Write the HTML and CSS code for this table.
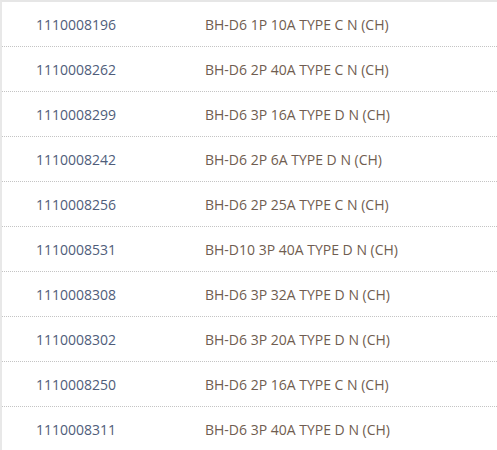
FILE: index.html
```html
<!DOCTYPE html>
<html>
<head>
<meta charset="utf-8">
<link rel="stylesheet" href="styles.css">
</head>
<body>
<div class="list">
  <div class="row"><span class="code">1110008196</span><span class="name">BH-D6 1P 10A TYPE C N (CH)</span></div>
  <div class="row"><span class="code">1110008262</span><span class="name">BH-D6 2P 40A TYPE C N (CH)</span></div>
  <div class="row"><span class="code">1110008299</span><span class="name">BH-D6 3P 16A TYPE D N (CH)</span></div>
  <div class="row"><span class="code">1110008242</span><span class="name">BH-D6 2P 6A TYPE D N (CH)</span></div>
  <div class="row"><span class="code">1110008256</span><span class="name">BH-D6 2P 25A TYPE C N (CH)</span></div>
  <div class="row"><span class="code">1110008531</span><span class="name">BH-D10 3P 40A TYPE D N (CH)</span></div>
  <div class="row"><span class="code">1110008308</span><span class="name">BH-D6 3P 32A TYPE D N (CH)</span></div>
  <div class="row"><span class="code">1110008302</span><span class="name">BH-D6 3P 20A TYPE D N (CH)</span></div>
  <div class="row"><span class="code">1110008250</span><span class="name">BH-D6 2P 16A TYPE C N (CH)</span></div>
  <div class="row"><span class="code">1110008311</span><span class="name">BH-D6 3P 40A TYPE D N (CH)</span></div>
</div>
</body>
</html>
```

FILE: styles.css
```css
html, body {
  margin: 0;
  padding: 0;
  background: #fff;
}
.list {
  border-top: 2px solid #e6e6e6;
  border-left: 2px solid #e8e8e8;
  font-family: "Open Sans", "Liberation Sans", sans-serif;
  font-size: 14px;
}
.row {
  display: flex;
  align-items: center;
  height: 44px;
  border-bottom: 1px dotted #c4c4c4;
}
.row:last-child {
  border-bottom: none;
}
.code {
  width: 169px;
  padding-left: 34px;
  color: #4f5d7a;
}
.name {
  color: #705d50;
}
```
